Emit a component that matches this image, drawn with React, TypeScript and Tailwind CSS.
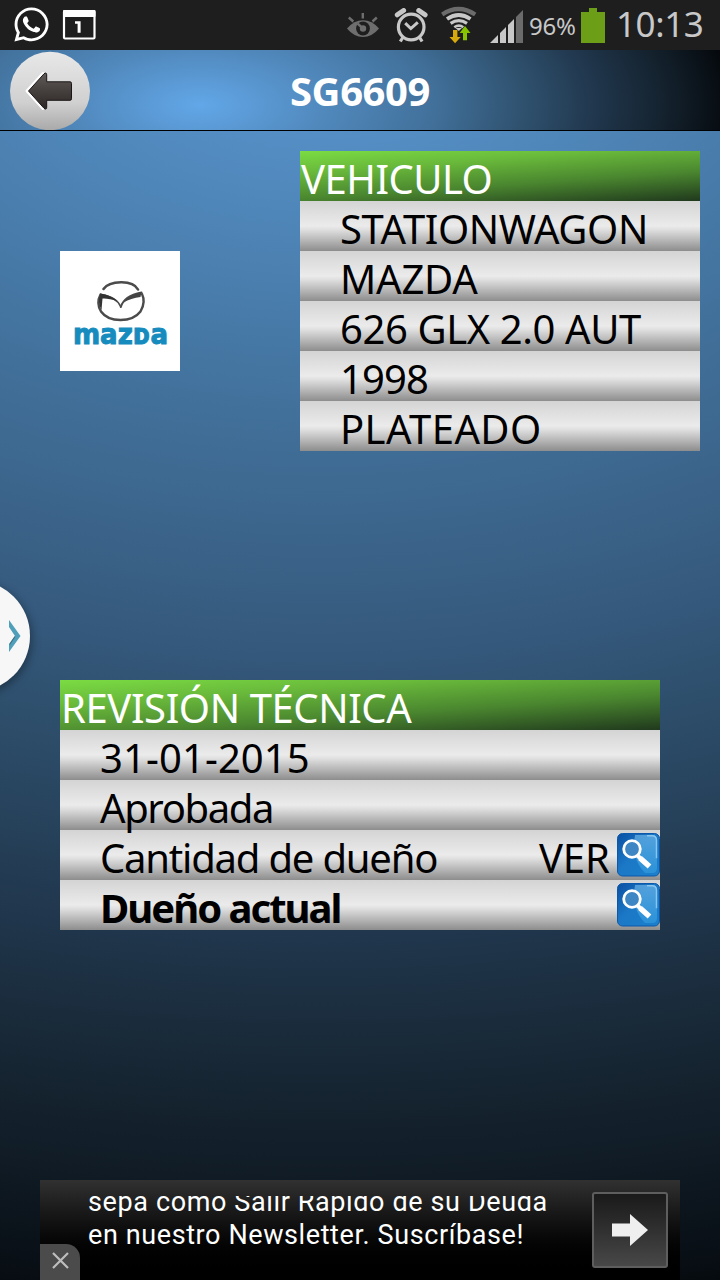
import type { ReactNode } from "react";
import { FaWhatsapp } from "react-icons/fa";

export default function App() {
  return (
    <div className="relative flex h-[1280px] w-[720px] flex-col overflow-hidden bg-black font-['Noto_Sans','Open_Sans',sans-serif]">
      <StatusBar />
      <TitleBar title="SG6609" />

      <main className="flex flex-1 flex-col bg-[radial-gradient(ellipse_2000px_1340px_at_320px_-130px,#5c9ad5_0%,#5189bd_14%,#41709a_31%,#3b6389_41%,#34587b_49%,#2e4f6c_55%,#20364c_70%,#182836_79%,#101b25_88%,#080e14_96%,#000_102%)]">
        <section className="flex items-start pt-5">
          <div className="mt-[100px] ml-[60px]">
            <MazdaLogo />
          </div>
          <div className="ml-[120px] w-[400px]">
            <TableTitle>
              <span className="tracking-[-0.5px]">VEHICULO</span>
            </TableTitle>
            <Row>
              <span className="tracking-[-0.4px]">STATIONWAGON</span>
            </Row>
            <Row>
              <span className="tracking-[-0.2px]">MAZDA</span>
            </Row>
            <Row>
              <span className="tracking-[-0.4px]">626 GLX 2.0 AUT</span>
            </Row>
            <Row>
              <span className="tracking-[-0.9px]">1998</span>
            </Row>
            <Row>
              <span className="tracking-[0.4px]">PLATEADO</span>
            </Row>
          </div>
        </section>

        <section className="mt-[229px] ml-[60px] w-[600px]">
          <TableTitle>
            <span className="tracking-[-0.4px]">REVISIÓN TÉCNICA</span>
          </TableTitle>
          <Row>
            <span className="tracking-[0.1px]">31-01-2015</span>
          </Row>
          <Row>
            <span className="tracking-[-1.4px]">Aprobada</span>
          </Row>
          <Row action={<SearchIcon />} actionLabel="VER">
            <span className="tracking-[-1.2px]">Cantidad de dueño</span>
          </Row>
          <Row action={<SearchIcon />}>
            <span className="font-bold tracking-[-2px]">Dueño actual</span>
          </Row>
        </section>

        <AdBanner />
      </main>

      <SideHandle />
    </div>
  );
}

function StatusBar() {
  return (
    <header className="flex h-[50px] shrink-0 items-start bg-[#1e1e1e] text-[#c8c8c8]">
      <FaWhatsapp className="mt-[5px] ml-3 size-[39px] text-white" />
      <svg width="34" height="31" viewBox="62 9 34 31" className="mt-[9px] ml-[11px]">
        <rect x="64" y="11" width="30.5" height="27.5" rx="1" fill="none" stroke="#fff" strokeWidth="2.2" />
        <rect x="63" y="10" width="32.5" height="7" rx="1" fill="#fff" />
        <path d="M75 21.2h5.6v11.6h-3v-9H75z" fill="#fff" />
      </svg>

      {/* smart stay */}
      <svg width="34" height="28" viewBox="346 12 34 28" className="mt-3 ml-[250px]" fill="none" stroke="#6e6e6e">
        <path d="M347 28.5q7-8.3 16-8.3t16 8.3q-7 8.5-16 8.5t-16-8.5z" fill="#6e6e6e" stroke="none" />
        <circle cx="363" cy="28.5" r="6.9" fill="#1e1e1e" stroke="none" />
        <circle cx="363" cy="28.5" r="3.2" fill="#6e6e6e" stroke="none" />
        <path d="M357.5 23.5l4.5 4.2" strokeWidth="2.4" />
        <path d="M348.8 17.5l4.5 4M362.8 13v5.5M376.8 17.5l-4.3 4" strokeWidth="2.4" />
      </svg>

      {/* alarm */}
      <svg width="34" height="36" viewBox="394 8 34 36" className="mt-2 ml-[14px]" fill="none" stroke="#c8c8c8">
        <circle cx="411.2" cy="27" r="12.8" strokeWidth="3.2" />
        <path d="M397.3 14.8l6.3-4.3M425.1 14.8l-6.3-4.3" strokeWidth="5" strokeLinecap="round" />
        <path d="M402.8 37.5l-2.5 4M419.6 37.5l2.5 4" strokeWidth="3.2" />
        <path d="M405.2 23.2l5.6 5.3 7-6.2" strokeWidth="3" />
      </svg>

      {/* wifi with traffic arrows */}
      <svg width="36" height="38" viewBox="441 6 36 38" className="mt-1.5 ml-[13px]" fill="none" stroke="#c8c8c8">
        <path d="M442.2 14.5q16.3-11 33 0" stroke="#6b6b6b" strokeWidth="4.2" />
        <path d="M447 19q11.7-8 23.5 0" strokeWidth="3.8" />
        <path d="M450.6 23.4q8.2-5.5 16.4 0" strokeWidth="3.2" />
        <path d="M454.3 27.2q4.6-3.2 9 0" strokeWidth="2.6" />
        <path d="M455.5 28h6.5l-3.2 3z" fill="#c8c8c8" stroke="none" />
        <path d="M453 30h4.4v7h3.3l-5.6 6.2-5.6-6.2h3.5z" fill="#d6a90d" stroke="none" />
        <path d="M463 40.3V33h-3.4l5.4-7 5.5 7H467v7.3z" fill="#86c400" stroke="none" />
      </svg>

      <svg width="34" height="34" viewBox="490 10 34 34" className="mt-2.5 ml-[13px]">
        <path d="M490 43l8-8v8zM500 43V33l6-6v16zM508 43V25l6-6v24z" fill="#c8c8c8" />
        <path d="M516 43V17l7-7v33z" fill="#6b6b6b" />
      </svg>

      <span className="mt-[9px] ml-[5px] w-[52px] text-[24px] leading-[34px] tracking-[-0.2px]">96%</span>
      <svg width="24" height="35" viewBox="0 0 24 35" className="mt-2">
        <path d="M8 0h8v4h8v31H0V4h8z" fill="#6d9e18" />
      </svg>
      <span className="mt-[3px] ml-[11px] text-[35px] leading-[42px] tracking-[-0.4px]">10:13</span>
    </header>
  );
}

function TitleBar({ title }: { title: string }) {
  return (
    <div className="relative flex h-[81px] shrink-0 items-start justify-center border-b border-black bg-[radial-gradient(ellipse_560px_250px_at_200px_55px,#62a7e8_0%,#5189bd_22%,#41709a_42%,#2f516e_58%,#20364c_71%,#14222e_83%,#05090d_95%,#000_100%)]">
      <svg width="80" height="80" viewBox="0 0 80 80" className="absolute top-0 left-2.5">
        <defs>
          <linearGradient id="disc" x1="0" y1="0" x2="0" y2="1">
            <stop offset="0" stopColor="#e8e8e8" />
            <stop offset="0.65" stopColor="#d0d0d0" />
            <stop offset="1" stopColor="#a9a9a9" />
          </linearGradient>
          <linearGradient id="arrow" x1="0" y1="0" x2="0" y2="1">
            <stop offset="0" stopColor="#5f5a58" />
            <stop offset="1" stopColor="#2b2524" />
          </linearGradient>
        </defs>
        <ellipse cx="40" cy="41" rx="40" ry="39.2" fill="url(#disc)" />
        <path d="M17 41L33 23.5M17 41L33 58.5" stroke="#fff" strokeWidth="3" strokeLinecap="round" />
        <path
          d="M18.5 41L34 23.8q2.7-2 2.7 1V31.8H60q1.5 0 1.5 1.5v15.5q0 1.5-1.5 1.5H36.7v7q0 3-2.7 1z"
          fill="url(#arrow)"
          stroke="#1b1716"
          strokeWidth="1"
          strokeLinejoin="round"
        />
      </svg>
      <h1 className="text-[40px] leading-[81px] font-bold tracking-[-0.4px] text-white">{title}</h1>
    </div>
  );
}

function TableTitle({ children }: { children: ReactNode }) {
  return (
    <h2 className="h-[50px] bg-[linear-gradient(176deg,#7bdc43_0%,#69b93b_28%,#4a862f_62%,#20391d_100%)] pl-px text-[40px] leading-[55px] whitespace-nowrap text-white">
      {children}
    </h2>
  );
}

function Row({ children, action, actionLabel }: { children: ReactNode; action?: ReactNode; actionLabel?: string }) {
  return (
    <div className="flex h-[50px] items-start bg-[linear-gradient(#d4d4d4_0%,#ebebeb_50%,#dedede_58%,#8d8d8d_100%)] pl-10 text-[40px] leading-[55px] whitespace-nowrap text-black">
      <div className="flex-1">{children}</div>
      {actionLabel && <span className="mr-[7px]">{actionLabel}</span>}
      {action}
    </div>
  );
}

function SearchIcon() {
  return (
    <svg width="43" height="44" viewBox="0 0 43 44" className="mt-[3px]">
      <defs>
        <linearGradient id="tile" x1="0" y1="0" x2="1" y2="1">
          <stop offset="0" stopColor="#0a4fa3" />
          <stop offset="0.45" stopColor="#1b78c6" />
          <stop offset="1" stopColor="#1c80cc" />
        </linearGradient>
        <linearGradient id="gloss" x1="0" y1="0" x2="0" y2="1">
          <stop offset="0" stopColor="#6cb4e6" />
          <stop offset="1" stopColor="#319ade" />
        </linearGradient>
      </defs>
      <rect x="0.5" y="0.5" width="42" height="42.5" rx="5" fill="url(#tile)" stroke="#0c59ab" />
      <path d="M18 2h17q5 0 5 5v28q0 5-5 5h-7Q14 26 18 2z" fill="url(#gloss)" opacity="0.7" />
      <path d="M30 2.8h5q4.5 0 4.5 4.5v18" fill="none" stroke="#9bd0f3" strokeWidth="1.5" opacity="0.8" />
      <path d="M20.5 22.500l3.5 3.500" stroke="#fff" strokeWidth="4" />
      <path d="M23 25l9.500 8.500" stroke="#fff" strokeWidth="5.500" />
      <circle cx="15" cy="16" r="8.300" fill="#3f86c4" stroke="#fff" strokeWidth="2.800" />
    </svg>
  );
}

function MazdaLogo() {
  return (
    <svg width="120" height="120" viewBox="0 0 120 120" className="bg-white">
      <g fill="none" stroke="#4b4b4b" strokeLinecap="round">
        <path d="M43.5 38Q48 31.5 61 31.3T78 38.5" strokeWidth="2.6" />
        <path d="M40.5 43.5Q36 52 41 60.5 47 69 60.5 69T80.5 60.5Q86 51 82 43" strokeWidth="2.4" />
        <path d="M41 43.5Q57 46 60.8 56" strokeWidth="1.5" />
        <path d="M81.5 41.5Q64 45 60.8 56" strokeWidth="2" />
      </g>
      <path d="M40.5 42.5Q51 44 57.5 50 48 47 42.5 47.5L41.5 59Q37 51 40.5 42.5z" fill="#333" />
      <path d="M81.5 41Q69 43.5 63.5 51.5 71 47 80.5 46z" fill="#444" />
      <text
        x="13"
        y="92.5"
        textLength="95"
        lengthAdjust="spacingAndGlyphs"
        className="fill-[#168bbd] stroke-[#168bbd] stroke-1 font-['DejaVu_Sans',sans-serif] text-[28px] font-bold"
      >
        mazᴅa
      </text>
    </svg>
  );
}

function SideHandle() {
  return (
    <div className="absolute top-[580px] left-[-82px] flex size-[112px] items-center justify-end rounded-full bg-[#f7f7f7] shadow-[2px_3px_8px_rgba(0,0,0,0.35)]">
      <svg width="12" height="33" viewBox="0 0 12 33" className="mr-[9px]">
        <path d="M0 0l11.5 16L0 32v-7.5L6 16 0 7z" fill="#4f9fba" />
        <path d="M0.5 24.5L6 16.5" stroke="#3a6f82" strokeWidth="1.2" />
      </svg>
    </div>
  );
}

function AdBanner() {
  return (
    <aside className="relative mt-auto ml-10 flex h-[100px] w-[640px] bg-linear-to-b from-[#313131] to-black font-[Roboto,sans-serif]">
      <div className="mt-4 ml-12 h-[70px] w-[504px] overflow-hidden text-[27px] leading-[33px] whitespace-nowrap text-white">
        <p className="mt-[-10px] tracking-[0.62px]">sepa como Salir Rápido de su Deuda</p>
        <p className="tracking-[0.6px]">en nuestro Newsletter. Suscríbase!</p>
      </div>
      <button className="mt-3 flex size-[76px] items-center justify-center rounded-[3px] border-2 border-[#5e5e5e] bg-linear-to-b from-[#1a1a1a] to-[#484848]">
        <svg width="36" height="32" viewBox="0 0 36 32">
          <path d="M0 9.5h18V0l18 16-18 16v-9.5H0z" fill="#efefef" />
        </svg>
      </button>
      <button className="absolute bottom-0 left-0 flex h-9 w-10 justify-center rounded-tr-[14px] bg-[#4b4b4b] pt-2">
        <svg width="17" height="17" viewBox="0 0 17 17">
          <path d="M1 1l15 15M16 1L1 16" stroke="#bdbdbd" strokeWidth="2.2" />
        </svg>
      </button>
    </aside>
  );
}
